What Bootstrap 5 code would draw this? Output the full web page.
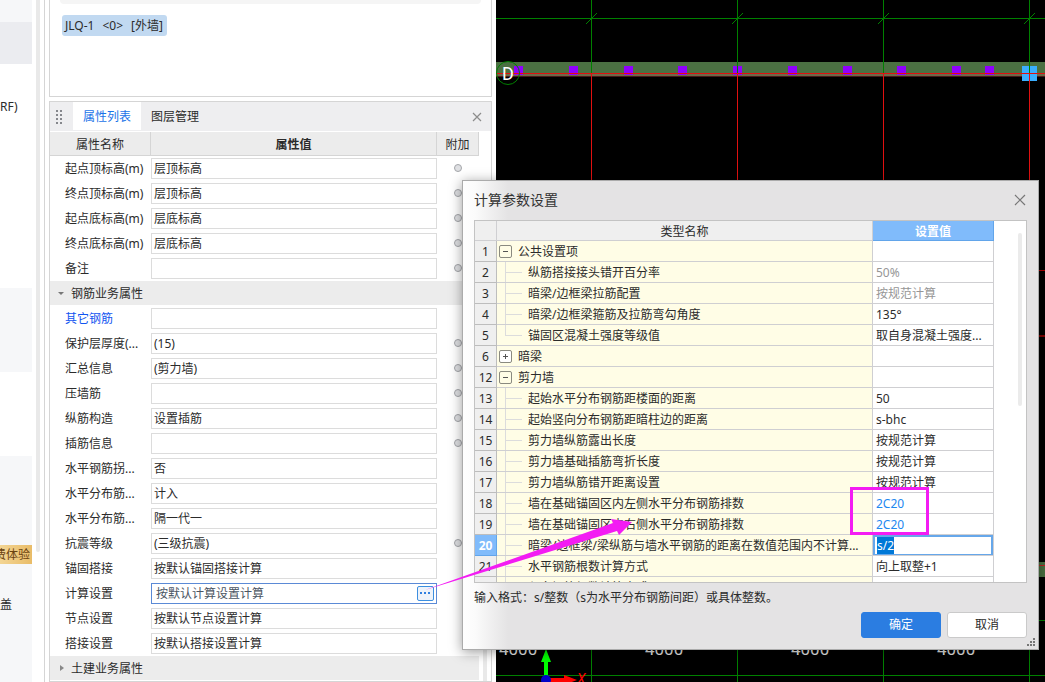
<!DOCTYPE html>
<html lang="zh-CN">
<head>
<meta charset="utf-8">
<meta name="viewport" content="width=device-width, initial-scale=1">
<title>计算参数设置</title>
<link href="https://cdn.jsdelivr.net/npm/bootstrap@5.3.0/dist/css/bootstrap.min.css" rel="stylesheet">
<style>
body{font:12px/18px "Noto Sans","Noto Sans CJK SC",sans-serif;color:#2b2b2b;background:#fff}
.side{width:32px}
.side>div{white-space:nowrap;flex:none}
.tint{background:#f6f7f9}
.tint-dark{background:#ebecf0}
.trial{background:linear-gradient(90deg,#f3d594,#e9bc68);color:#6b4310;height:19px;line-height:20px;direction:rtl;padding-right:2px}
.track{width:13px;padding:0 4px;border-right:1px solid #d5d5d5}
.track>div{height:552px;background:#e9e9e9;border-radius:0 0 2px 2px}
.dock{width:443px;margin:0 4px}
.pane{border:1px solid #d5d5d5}
.list-pane{height:97px;border-top:0}
.search-end{height:4px;background:#f5f5f5;border-radius:0 0 8px 8px;margin:0 10px}
.chip{background:#c1d9f1;border-radius:3px;color:#2b2b2b;margin:11px 12px;height:21px;padding:2px 3px 1px;width:105px;white-space:nowrap}
.tabs{background:#eeeef0;height:30px;border-bottom:1px solid #fff}
.grip{width:23px;padding-left:6px}
.tabs button{border:0;background:none;padding:2px 10px 0;height:28px;color:#2b2b2b}
.tabs button.active{background:#fff;color:#1a73e8}
.tabs .shut{padding:0 9px}
.prop{display:grid;grid-template-columns:100px 1fr 42px 12px;align-items:center;height:25px}
.prop.heads{height:24px;text-align:center}
.heads>span{background:#ececec;border-bottom:1px solid #d5d5d5;border-right:1px solid #d5d5d5;height:24px;line-height:25px}
.heads>span.blank{background:none;border:0}
.heads>span:first-child{margin-right:-1px}
.heads>span:nth-child(2){margin-left:1px}
.prop label{padding-left:15px;white-space:nowrap}
.field input,.prop>input[type=text]{width:100%;height:21px;border:1px solid #dcdcdc;padding:0 2px 1px;color:#2b2b2b;background:#fff;display:block;outline:0;border-radius:0}
.prop>input[type=text]{width:auto;margin:0 0 0 1px}
.field{position:relative;margin:0 0 0 1px}
.field input{border-color:#5b8ad6;padding-left:4px;color:#4a5562}
.field button{position:absolute;right:3px;top:3px;width:17px;height:15px;border:1px solid #3d8fe0;border-radius:2px;background:#eef3fa;padding:0}
.field button svg{display:block}
.prop>input[type=checkbox]{appearance:none;width:8px;height:8px;border:1px solid #a4a6aa;border-radius:50%;background:#dfe0e3;margin:0 0 2px;justify-self:center}
.fold{background:#ececec;height:24px;margin:0 12px 1px 0;border:0;padding:1px 8px 0;display:flex;align-items:center;gap:6px;text-align:left;color:#2b2b2b}
.thumb{position:absolute;right:4px;bottom:0;width:4px;height:320px;background:#e9e9e9}
.stage{background:#000;min-width:0}
.dialog-box{position:absolute;left:462px;right:6px;top:180px;bottom:32px;border:1px solid #ababab;padding:0 11px;background:linear-gradient(90deg,#fefefe 0,#fbfbfb 12px,#e4e3e4 45px);box-shadow:0 2px 12px rgba(0,0,0,.4)}
.dialog-box h1{font-size:14px;line-height:20px;font-weight:400;color:#333}
.bar{height:39px;padding-bottom:2px}
.bare{border:0;background:none;padding:0}
.frame{border:1px solid #c3c3c3;background:#fff;min-height:0}
.params{width:calc(100% - 32px);table-layout:fixed;border-collapse:separate;border-spacing:0}
.params th,.params td{height:21px;padding:2px 0 0;border-right:1px solid #cfcfd2;border-bottom:1px solid #cfcfd2;line-height:18px;white-space:nowrap;overflow:hidden;font-weight:400}
.params thead th{height:20px;line-height:17px;background:#efefef;text-align:center}
.params thead th:last-child,.params th.now{background:#80bbfb;border-color:#62a5ea;color:#fff;font-weight:700}
.params tbody th{background:#efefef;text-align:center;border-color:#bdbdbd}
.params tbody th.now{background:#80bbfb}
.params td{padding-left:3px}
.params td:nth-child(2){background-color:#fffde6}
.params .sub{padding-left:31px;background-image:linear-gradient(#dcdcdc,#dcdcdc),linear-gradient(#dcdcdc,#dcdcdc);background-repeat:no-repeat;background-size:1px 100%,16px 1px;background-position:8px 0,9px 10px}
.params .sub.end{background-size:1px 11px,16px 1px}
.params .off{color:#969696}
.params .blue{color:#1e88f0}
.params td.edit{padding:0}
.edit input{display:block;width:100%;height:21px;margin-bottom:-1px;border:2px solid #66a7ea;padding:0 2px;color:#2b2b2b;outline:0;border-radius:0;line-height:16px}
.edit input::selection{background:#0078d7;color:#fff}
.node{width:13px;height:13px;border:1px solid #8a8a80;border-radius:2px;background:none;padding:0;margin:0 6px 0 -1px;vertical-align:-1px;display:inline-block}
.node svg{display:block}
.roll{width:4px;height:173px;background:#ebebeb;border-radius:2px;margin:12px 4px 0 auto}
.foot-row{height:66px;padding-top:6px}
.foot-row .btn{width:80px;height:26px;font-size:12px;line-height:18px;padding:2px;border-radius:3px}
.btn.ok{background:#2b7de1;border-color:#2b7de1;color:#fff}
.btn.no{background:#fff;border-color:#cacaca;color:#2b2b2b}
.corner{position:absolute;right:2px;bottom:2px}
.marks{position:absolute;left:0;top:0;pointer-events:none}
</style>
</head>
<body>
<div class="d-flex vh-100 overflow-hidden position-relative">
  <aside class="side d-flex flex-column overflow-hidden flex-shrink-0">
    <div class="tint" style="height:22px"></div>
    <div class="tint-dark" style="height:42px"></div>
    <div style="height:224px;padding-top:34px">RF)</div>
    <div class="tint" style="height:84px"></div>
    <div style="height:84px"></div>
    <div class="tint" style="height:89px"></div>
    <div class="trial"><span>免费体验</span></div>
    <div class="tint flex-fill" style="padding-top:32px">盖</div>
  </aside>
  <div class="track flex-shrink-0"><div></div></div>

  <main class="dock d-flex flex-column flex-shrink-0">
    <section class="pane list-pane">
      <div class="search-end"></div>
      <div class="chip d-flex gap-2"><span>JLQ-1</span><span>&lt;0&gt;</span><span>[外墙]</span></div>
    </section>
    <section class="pane mt-1 flex-fill position-relative">
      <div class="tabs d-flex align-items-start">
        <span class="grip align-self-center"><svg width="8" height="14" fill="#85878c" class="d-block"><path d="M0 0h2v2H0zM4 0h2v2H4zM0 4h2v2H0zM4 4h2v2H4zM0 8h2v2H0zM4 8h2v2H4zM0 12h2v2H0zM4 12h2v2H4z"/></svg></span>
        <button type="button" class="active">属性列表</button>
        <button type="button">图层管理</button>
        <button type="button" class="shut ms-auto" aria-label="关闭"><svg width="10" height="10" stroke="#8c8c8c" stroke-width="1.2"><path d="M1 1l8 8M9 1l-8 8"/></svg></button>
      </div>
      <div class="prop heads"><span>属性名称</span><span class="fw-bold">属性值</span><span>附加</span><span class="blank"></span></div>
      <div class="prop"><label for="p1">起点顶标高(m)</label><input type="text" id="p1" value="层顶标高"><input type="checkbox" aria-label="附加"></div>
      <div class="prop"><label for="p2">终点顶标高(m)</label><input type="text" id="p2" value="层顶标高"><input type="checkbox" aria-label="附加"></div>
      <div class="prop"><label for="p3">起点底标高(m)</label><input type="text" id="p3" value="层底标高"><input type="checkbox" aria-label="附加"></div>
      <div class="prop"><label for="p4">终点底标高(m)</label><input type="text" id="p4" value="层底标高"><input type="checkbox" aria-label="附加"></div>
      <div class="prop"><label for="p5">备注</label><input type="text" id="p5"><input type="checkbox" aria-label="附加"></div>
      <div class="d-grid"><button type="button" class="fold"><svg width="7" height="8" fill="#777"><path d="M0 2h6L3 5z"/></svg>钢筋业务属性</button></div>
      <div class="prop"><label for="p6" style="color:#1255f0">其它钢筋</label><input type="text" id="p6"></div>
      <div class="prop"><label for="p7">保护层厚度(...</label><input type="text" id="p7" value="(15)"><input type="checkbox" aria-label="附加"></div>
      <div class="prop"><label for="p8">汇总信息</label><input type="text" id="p8" value="(剪力墙)"><input type="checkbox" aria-label="附加"></div>
      <div class="prop"><label for="p9">压墙筋</label><input type="text" id="p9"><input type="checkbox" aria-label="附加"></div>
      <div class="prop"><label for="p10">纵筋构造</label><input type="text" id="p10" value="设置插筋"><input type="checkbox" aria-label="附加"></div>
      <div class="prop"><label for="p11">插筋信息</label><input type="text" id="p11"><input type="checkbox" aria-label="附加"></div>
      <div class="prop"><label for="p12">水平钢筋拐...</label><input type="text" id="p12" value="否"></div>
      <div class="prop"><label for="p13">水平分布筋...</label><input type="text" id="p13" value="计入"></div>
      <div class="prop"><label for="p14">水平分布筋...</label><input type="text" id="p14" value="隔一代一"></div>
      <div class="prop"><label for="p15">抗震等级</label><input type="text" id="p15" value="(三级抗震)"><input type="checkbox" aria-label="附加"></div>
      <div class="prop"><label for="p16">锚固搭接</label><input type="text" id="p16" value="按默认锚固搭接计算"></div>
      <div class="prop"><label for="p17">计算设置</label><div class="field"><input type="text" id="p17" value="按默认计算设置计算"><button type="button" aria-label="更多"><svg width="15" height="13" fill="#2f7fe0"><path d="M2 5h2v2H2zM6 5h2v2H6zM10 5h2v2h-2z"/></svg></button></div></div>
      <div class="prop"><label for="p18">节点设置</label><input type="text" id="p18" value="按默认节点设置计算"></div>
      <div class="prop"><label for="p19">搭接设置</label><input type="text" id="p19" value="按默认搭接设置计算"></div>
      <div class="d-grid"><button type="button" class="fold"><svg width="7" height="8" fill="#888"><path d="M2 0l4 3-4 3z"/></svg>土建业务属性</button></div>
      <div class="thumb"></div>
    </section>
  </main>

  <section class="stage flex-fill">
    <svg class="d-block" width="100%" height="100%" font-family="Roboto, sans-serif">
      <g shape-rendering="crispEdges">
        <rect y="62" width="100%" height="12" fill="#4b7042"/>
        <rect y="74" width="100%" height="2" fill="#6e6848"/>
        <rect y="76" width="100%" height="1" fill="#4a1a1a"/>
        <g fill="#9000ff"><path d="M18 66h9v9h-9zM73 66h9v9h-9zM128 66h9v9h-9zM182 66h9v9h-9zM237 66h9v9h-9zM292 66h9v9h-9zM347 66h9v9h-9zM401 66h9v9h-9zM456 66h9v9h-9zM489 66h9v9h-9z"/></g>
        <rect x="526" y="66" width="15" height="15" fill="#3aaeff"/>
        <g fill="#008000"><rect y="18" width="100%" height="1"/><path d="M95 0h1v73h-1zM241 0h1v73h-1zM387 0h1v73h-1zM533 0h1v73h-1z"/>
          <path d="M95 640h1v60h-1zM241 640h1v60h-1zM387 640h1v60h-1zM533 640h1v60h-1z"/><rect y="675" width="100%" height="1"/><rect x="500" y="620" width="100%" height="1"/></g>
        <g fill="#e01010"><rect y="73" width="100%" height="1"/><path d="M95 73h1v200h-1zM241 73h1v200h-1zM387 73h1v200h-1zM533 73h1v200h-1z"/></g>
        <rect x="500" y="270" width="100%" height="1" fill="#b00000"/><rect x="500" y="335" width="100%" height="2" fill="#800000"/>
        <rect x="500" y="562" width="100%" height="15" fill="#4b7042"/><rect x="500" y="565" width="100%" height="1" fill="#c02020"/>
      </g>
      <path d="M90 24l11-11M236 24l11-11M382 24l11-11M528 24l11-11" stroke="#008000"/>
      <circle cx="12" cy="73" r="11.5" fill="none" stroke="#008000"/>
      <text x="6" y="80" font-size="18" fill="#fff">D</text>
      <g font-size="17" fill="#e8e8e8"><text x="3" y="655">4000</text><text x="149" y="655">4000</text><text x="295" y="655">4000</text><text x="441" y="655">4000</text></g>
      <path d="M48 660h4v18h-4zM50 649l5 13H45z" fill="#0f0"/>
      <path d="M54 678h14v-3l13 5-13 5v-3H54z" fill="red"/>
      <circle cx="50" cy="680" r="5" fill="#0000c8"/>
      <text x="81" y="684" font-size="14" font-style="italic" fill="red">X</text>
    </svg>
  </section>

  <div class="dialog-box d-flex flex-column" role="dialog" aria-labelledby="dlg">
    <div class="bar d-flex align-items-center justify-content-between flex-shrink-0">
      <h1 class="m-0" id="dlg">计算参数设置</h1>
      <button type="button" class="bare" aria-label="关闭"><svg width="13" height="12" stroke="#777" stroke-width="1.2" class="d-block"><path d="M1 1l10 10M11 1L1 11"/></svg></button>
    </div>
    <div class="frame d-flex align-items-start flex-fill overflow-hidden">
      <table class="params flex-shrink-0">
        <colgroup><col style="width:22px"><col><col style="width:121px"></colgroup>
        <thead><tr><th></th><th>类型名称</th><th>设置值</th></tr></thead>
        <tbody>
          <tr><th>1</th><td><button type="button" class="node" aria-label="折叠"><svg width="11" height="11" stroke="#555"><path d="M3 5.5h5"/></svg></button>公共设置项</td><td></td></tr>
          <tr><th>2</th><td class="sub">纵筋搭接接头错开百分率</td><td class="off">50%</td></tr>
          <tr><th>3</th><td class="sub">暗梁/边框梁拉筋配置</td><td class="off">按规范计算</td></tr>
          <tr><th>4</th><td class="sub">暗梁/边框梁箍筋及拉筋弯勾角度</td><td>135°</td></tr>
          <tr><th>5</th><td class="sub end">锚固区混凝土强度等级值</td><td>取自身混凝土强度...</td></tr>
          <tr><th>6</th><td><button type="button" class="node bg-white" aria-label="展开"><svg width="11" height="11" stroke="#555"><path d="M3 5.5h5M5.5 3v5"/></svg></button>暗梁</td><td></td></tr>
          <tr><th>12</th><td><button type="button" class="node" aria-label="折叠"><svg width="11" height="11" stroke="#555"><path d="M3 5.5h5"/></svg></button>剪力墙</td><td></td></tr>
          <tr><th>13</th><td class="sub">起始水平分布钢筋距楼面的距离</td><td>50</td></tr>
          <tr><th>14</th><td class="sub">起始竖向分布钢筋距暗柱边的距离</td><td>s-bhc</td></tr>
          <tr><th>15</th><td class="sub">剪力墙纵筋露出长度</td><td>按规范计算</td></tr>
          <tr><th>16</th><td class="sub">剪力墙基础插筋弯折长度</td><td>按规范计算</td></tr>
          <tr><th>17</th><td class="sub">剪力墙纵筋错开距离设置</td><td>按规范计算</td></tr>
          <tr><th>18</th><td class="sub">墙在基础锚固区内左侧水平分布钢筋排数</td><td class="blue">2C20</td></tr>
          <tr><th>19</th><td class="sub">墙在基础锚固区内右侧水平分布钢筋排数</td><td class="blue">2C20</td></tr>
          <tr><th class="now">20</th><td class="sub">暗梁/边框梁/梁纵筋与墙水平钢筋的距离在数值范围内不计算...</td><td class="edit"><input type="text" id="val" value="s/2" aria-label="设置值"></td></tr>
          <tr><th>21</th><td class="sub">水平钢筋根数计算方式</td><td>向上取整+1</td></tr>
          <tr><th></th><td class="sub">竖向钢筋根数计算方式</td><td></td></tr>
        </tbody>
      </table>
      <div class="roll"></div>
    </div>
    <div class="foot-row flex-shrink-0">
      <div>输入格式：s/整数（s为水平分布钢筋间距）或具体整数。</div>
      <div class="d-flex justify-content-end" style="gap:6px;padding-top:5px">
        <button type="button" class="btn ok">确定</button>
        <button type="button" class="btn no">取消</button>
      </div>
    </div>
    <svg class="corner" width="10" height="10" fill="#777"><path d="M7 1h2v2H7zM4 4h2v2H4zM7 4h2v2H7zM1 7h2v2H1zM4 7h2v2H4zM7 7h2v2H7z"/></svg>
  </div>

  <svg class="marks" width="100%" height="100%">
    <path d="M425 590L613 523L611 519L632 522L619 535L617 531Z" fill="#f31cf3"/>
    <rect x="851.5" y="488.5" width="76" height="45" fill="none" stroke="#f31cf3" stroke-width="3"/>
  </svg>
</div>
<script src="https://cdn.jsdelivr.net/npm/bootstrap@5.3.0/dist/js/bootstrap.bundle.min.js"></script>
<script>
const val = document.getElementById('val');
val.focus({preventScroll: true});
val.select();
</script>
</body>
</html>
